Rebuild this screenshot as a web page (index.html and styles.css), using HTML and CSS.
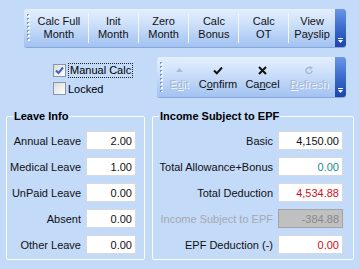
FILE: index.html
```html
<!DOCTYPE html>
<html lang="en">
<head>
    <meta charset="UTF-8">
    <title>Payroll - Employee Month</title>
    <link rel="stylesheet" href="styles.css">
</head>
<body>
    <div class="top">
        <div class="toolbar toolbar-main">
            <span class="grip"></span>
            <button class="tb-btn w-full">Calc Full<br>Month</button>
            <button class="tb-btn w-init">Init<br>Month</button>
            <button class="tb-btn w-zero">Zero<br>Month</button>
            <button class="tb-btn w-bonus">Calc<br>Bonus</button>
            <button class="tb-btn w-ot">Calc<br>OT</button>
            <button class="tb-btn w-pay">View<br>Payslip</button>
            <span class="overflow">
                <svg viewBox="0 0 5 6" width="5" height="6"><rect x="0" y="0" width="5" height="1" fill="#fff"/><polygon points="0,2 5,2 2.5,5" fill="#fff"/></svg>
            </span>
        </div>

        <div class="mid">
            <div class="checks">
                <label class="check">
                    <span class="box">
                        <svg viewBox="0 0 11 11" width="11" height="11"><path d="M2 5.5 L4.5 8 L9 2.5" fill="none" stroke="#3f63c4" stroke-width="2"/></svg>
                    </span>
                    <span class="focus">Manual Calc</span>
                </label>
                <label class="check">
                    <span class="box"></span>
                    <span>Locked</span>
                </label>
            </div>

            <div class="toolbar toolbar-edit">
                <span class="grip"></span>
                <button class="act w-edit" disabled>
                    <svg viewBox="0 0 9 9" width="9" height="9"><polygon points="1,6 4.5,2 8,6" fill="#a9bbd6"/></svg>
                    <span>E<u>d</u>it</span>
                </button>
                <button class="act w-confirm">
                    <svg viewBox="0 0 10 9" width="10" height="9"><path d="M1 4.5 L3.8 7.3 L9 1.5" fill="none" stroke="#111" stroke-width="2"/></svg>
                    <span>C<u>o</u>nfirm</span>
                </button>
                <button class="act w-cancel">
                    <svg viewBox="0 0 9 9" width="9" height="9"><path d="M1 1 L8 8 M8 1 L1 8" stroke="#111" stroke-width="2"/></svg>
                    <span>Ca<u>n</u>cel</span>
                </button>
                <button class="act w-refresh" disabled>
                    <svg viewBox="0 0 9 9" width="9" height="9"><path d="M7 4.5 A3 3 0 1 1 5 1.7" fill="none" stroke="#a9bbd6" stroke-width="1.6"/><polygon points="4,0 8,1.5 5,4" fill="#a9bbd6"/></svg>
                    <span><u>R</u>efresh</span>
                </button>
                <span class="overflow">
                    <svg viewBox="0 0 5 6" width="5" height="6"><rect x="0" y="0" width="5" height="1" fill="#fff"/><polygon points="0,2 5,2 2.5,5" fill="#fff"/></svg>
                </span>
            </div>
        </div>
    </div>

    <div class="groups">
        <fieldset class="group group-leave">
            <legend>Leave Info</legend>
            <div class="field"><span class="label">Annual Leave</span><input class="num" type="text" value="2.00" readonly></div>
            <div class="field"><span class="label">Medical Leave</span><input class="num" type="text" value="1.00" readonly></div>
            <div class="field"><span class="label">UnPaid Leave</span><input class="num" type="text" value="0.00" readonly></div>
            <div class="field"><span class="label">Absent</span><input class="num" type="text" value="0.00" readonly></div>
            <div class="field"><span class="label">Other Leave</span><input class="num" type="text" value="0.00" readonly></div>
        </fieldset>

        <fieldset class="group group-epf">
            <legend>Income Subject to EPF</legend>
            <div class="field"><span class="label">Basic</span><input class="num" type="text" value="4,150.00" readonly></div>
            <div class="field"><span class="label">Total Allowance+Bonus</span><input class="num teal" type="text" value="0.00" readonly></div>
            <div class="field"><span class="label">Total Deduction</span><input class="num red" type="text" value="4,534.88" readonly></div>
            <div class="field disabled"><span class="label">Income Subject to EPF</span><input class="num" type="text" value="-384.88" disabled></div>
            <div class="field"><span class="label">EPF Deduction (-)</span><input class="num red" type="text" value="0.00" readonly></div>
        </fieldset>
    </div>
</body>
</html>
```

FILE: styles.css
```css
* {
    margin: 0;
    padding: 0;
    box-sizing: border-box;
}

body {
    font-family: "Liberation Sans", Arial, sans-serif;
    font-size: 11px;
    background: #c3daf9;
    color: #000;
    width: 359px;
    height: 269px;
    overflow: hidden;
}

button,
input {
    font-family: inherit;
    font-size: 11px;
}

/* toolbars */

.top {
    padding: 9px 13px 0 24px;
}

.toolbar {
    display: flex;
    align-items: stretch;
    background: linear-gradient(to bottom, #e4effd 0%, #d0e2fb 35%, #b3cef5 75%, #a3c2f0 100%);
    border-radius: 3px;
    box-shadow: 0 1px 0 #86a8dc;
    padding-left: 3px;
}

.toolbar-main {
    height: 38px;
}

.grip {
    width: 3px;
    margin: 5px 0;
    background:
        repeating-linear-gradient(to bottom, #fff 0 2px, transparent 2px 4px) 1px 1px / 2px 100% no-repeat,
        repeating-linear-gradient(to bottom, #7a9ad2 0 2px, transparent 2px 4px) 0 0 / 2px 100% no-repeat;
}

.tb-btn {
    background: none;
    border: none;
    line-height: 13px;
    text-align: center;
    color: #111;
    border-right: 1px solid #f4f8fe;
    margin: 4px 0;
}

.w-full { width: 59px; }
.w-init { width: 50px; }
.w-zero { width: 51px; }
.w-bonus { width: 50px; }
.w-ot { width: 50px; }
.w-pay { width: 46px; border-right: none; }

.overflow {
    margin-left: auto;
    width: 11px;
    background: linear-gradient(to bottom, #6b97e6 0%, #3f6fd0 45%, #1b45a6 100%);
    border-radius: 0 3px 3px 0;
    display: flex;
    align-items: flex-end;
    justify-content: center;
    padding-bottom: 3px;
}

.overflow svg {
    display: block;
}

.mid {
    display: flex;
    justify-content: space-between;
    margin-top: 10px;
    padding-left: 29px;
}

.checks {
    display: flex;
    flex-direction: column;
    gap: 3px;
    padding-top: 6px;
}

.check {
    display: flex;
    align-items: center;
    gap: 1px;
    height: 15px;
}

.box {
    width: 13px;
    height: 13px;
    border: 1px solid #8497b0;
    background: linear-gradient(135deg, #dcdcd7 0%, #f4f4f1 70%, #fff 100%);
    display: flex;
    align-items: center;
    justify-content: center;
    margin-right: 1px;
}

.box svg {
    display: block;
}

.focus {
    border: 1px dotted #222;
    padding: 0 1px;
    line-height: 13px;
}

.toolbar-edit {
    width: 189px;
    height: 40px;
}

.act {
    background: none;
    border: none;
    display: flex;
    flex-direction: column;
    align-items: center;
    justify-content: center;
    gap: 3px;
    color: #111;
    padding-top: 2px;
}

.act svg {
    display: block;
}

.act span {
    line-height: 13px;
}

.act:disabled {
    color: #a3b7d6;
    text-shadow: 1px 1px 0 #f2f7ff;
}

.w-edit { width: 32px; }
.w-confirm { width: 46px; }
.w-cancel { width: 43px; }
.w-refresh { width: 50px; }

/* group boxes */

.groups {
    display: flex;
    gap: 7px;
    padding: 0 5px 0 6px;
    margin-top: 13px;
}

.group {
    border: 1px solid #fbfdff;
    border-radius: 2px;
    padding: 8px 0 5px;
    display: flex;
    flex-direction: column;
    gap: 7px;
}

.group legend {
    font-weight: bold;
    line-height: 13px;
    padding: 0 1px;
    margin-left: 6px;
}

.group-leave {
    width: 139px;
    padding-right: 8px;
}

.group-epf {
    flex: 1;
    padding-right: 10px;
}

.field {
    display: flex;
    justify-content: flex-end;
    align-items: center;
    gap: 5px;
    height: 19px;
}

.label {
    color: #111;
}

.num {
    height: 19px;
    border: 1px solid #d6d9de;
    background: #fff;
    text-align: right;
    padding: 0 3px;
    color: #111;
    outline: none;
}

.group-leave .num {
    width: 50px;
}

.group-epf .num {
    width: 65px;
}

.num.teal {
    color: #1b8a8f;
}

.num.red {
    color: #d0101a;
}

.field.disabled .label {
    color: #a7a9ad;
}

.num:disabled {
    background: #c0c0c0;
    border-color: #a3a3a3;
    color: #8a8a8a;
}
```
